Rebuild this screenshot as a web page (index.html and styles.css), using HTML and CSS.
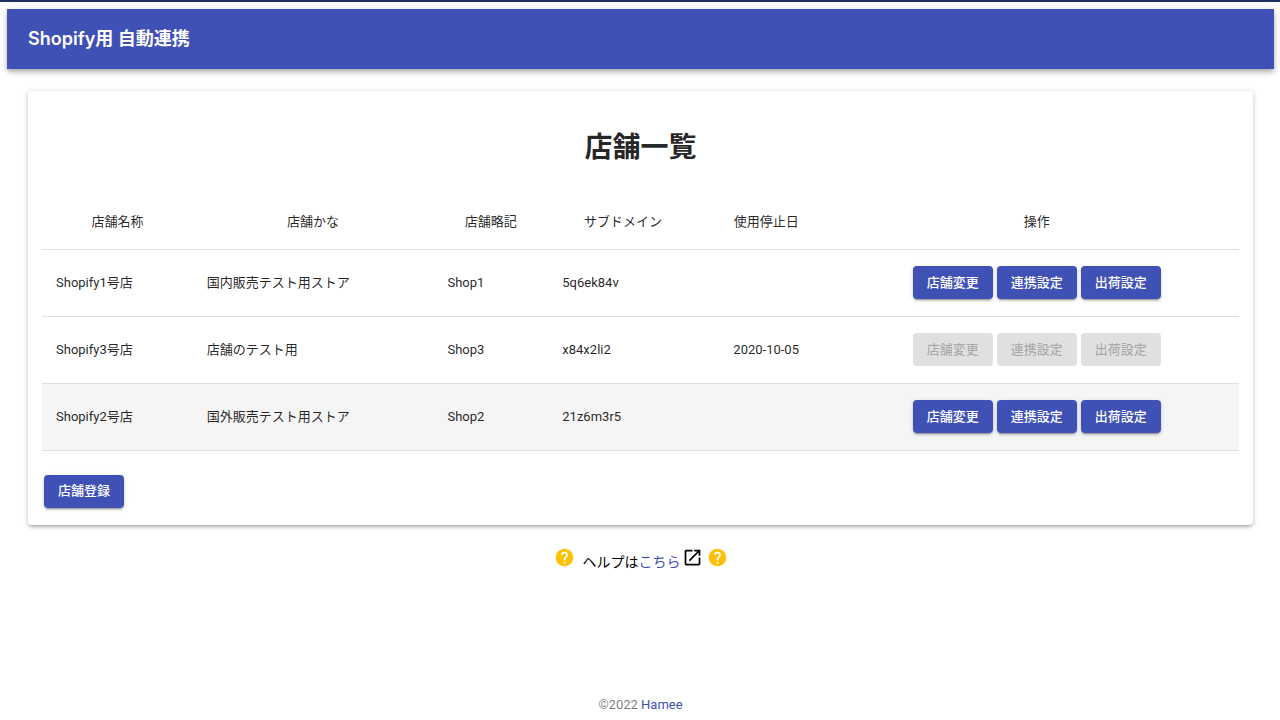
FILE: index.html
```html
<!DOCTYPE html>
<html lang="ja">
<head>
<meta charset="utf-8">
<meta name="viewport" content="width=device-width, initial-scale=1">
<title>Shopify用 自動連携</title>
<link rel="stylesheet" href="styles.css">
</head>
<body>
<header class="app-bar"><div class="app-title">Shopify用 自動連携</div></header>
<main class="content">
  <section class="card">
    <h1 class="card-title">店舗一覧</h1>
    <table class="shops">
      <colgroup><col class="c-name"><col class="c-kana"><col class="c-abbr"><col class="c-domain"><col class="c-date"><col class="c-actions"></colgroup>
      <thead>
        <tr><th scope="col">店舗名称</th><th scope="col">店舗かな</th><th scope="col">店舗略記</th><th scope="col">サブドメイン</th><th scope="col">使用停止日</th><th scope="col">操作</th></tr>
      </thead>
      <tbody>
        <tr><td>Shopify1号店</td><td>国内販売テスト用ストア</td><td>Shop1</td><td>5q6ek84v</td><td></td>
          <td><div class="actions"><button type="button" class="btn">店舗変更</button><button type="button" class="btn">連携設定</button><button type="button" class="btn">出荷設定</button></div></td></tr>
        <tr><td>Shopify3号店</td><td>店舗のテスト用</td><td>Shop3</td><td>x84x2li2</td><td class="date">2020-10-05</td>
          <td><div class="actions"><button type="button" class="btn" disabled>店舗変更</button><button type="button" class="btn" disabled>連携設定</button><button type="button" class="btn" disabled>出荷設定</button></div></td></tr>
        <tr class="highlight"><td>Shopify2号店</td><td>国外販売テスト用ストア</td><td>Shop2</td><td>21z6m3r5</td><td></td>
          <td><div class="actions"><button type="button" class="btn">店舗変更</button><button type="button" class="btn">連携設定</button><button type="button" class="btn">出荷設定</button></div></td></tr>
      </tbody>
    </table>
    <div class="card-footer"><button type="button" class="btn">店舗登録</button></div>
  </section>
  <div class="help">
    <svg class="icon help-icon" viewBox="0 0 24 24" aria-hidden="true"><path d="M12 2C6.48 2 2 6.48 2 12s4.48 10 10 10 10-4.48 10-10S17.52 2 12 2zm1 17h-2v-2h2v2zm2.07-7.75l-.9.92C13.45 12.9 13 13.5 13 15h-2v-.5c0-1.1.45-2.1 1.17-2.83l1.24-1.26c.37-.36.59-.86.59-1.41 0-1.1-.9-2-2-2s-2 .9-2 2H8c0-2.21 1.79-4 4-4s4 1.79 4 4c0 .88-.36 1.68-.93 2.25z"/></svg>
    <p class="help-text">ヘルプは<a href="#" class="link">こちら</a></p>
    <svg class="icon" viewBox="0 0 24 24" aria-hidden="true"><path d="M19 19H5V5h7V3H5c-1.11 0-2 .9-2 2v14c0 1.1.89 2 2 2h14c1.1 0 2-.9 2-2v-7h-2v7zM14 3v2h3.59l-9.83 9.83 1.41 1.41L19 6.41V10h2V3h-7z"/></svg>
    <svg class="icon help-icon trailing" viewBox="0 0 24 24" aria-hidden="true"><path d="M12 2C6.48 2 2 6.48 2 12s4.48 10 10 10 10-4.48 10-10S17.52 2 12 2zm1 17h-2v-2h2v2zm2.07-7.75l-.9.92C13.45 12.9 13 13.5 13 15h-2v-.5c0-1.1.45-2.1 1.17-2.83l1.24-1.26c.37-.36.59-.86.59-1.41 0-1.1-.9-2-2-2s-2 .9-2 2H8c0-2.21 1.79-4 4-4s4 1.79 4 4c0 .88-.36 1.68-.93 2.25z"/></svg>
  </div>
</main>
<footer class="footer">©2022 <a href="#" class="link">Hamee</a></footer>
</body>
</html>
```
FILE: styles.css
```css
* { box-sizing: border-box; }

body {
  margin: 0;
  min-height: 100vh;
  padding: 7px 6px 5px 7px;
  border-top: 2px solid #1d3160;
  display: flex;
  flex-direction: column;
  background: #fff;
  color: rgba(0, 0, 0, .87);
  font-family: Roboto, "Noto Sans CJK JP", sans-serif;
  font-size: 13px;
  line-height: 20px;
}

.app-bar {
  display: flex;
  align-items: center;
  min-height: 60px;
  padding: 0 21px;
  background: #3f51b5;
  color: #fff;
  box-shadow: 0 2px 4px -1px rgba(0, 0, 0, .2), 0 4px 5px rgba(0, 0, 0, .14), 0 1px 9px rgba(0, 0, 0, .12);
}

.app-title {
  font-family: Inter, "Noto Sans CJK JP", sans-serif;
  font-size: 18px;
  font-weight: 600;
  line-height: 28px;
}

.content { flex: 1; padding: 22px 21px 0; }

.card {
  padding: 33px 14px 17px;
  border-radius: 4px;
  background: #fff;
  box-shadow: 0 3px 3px -2px rgba(0, 0, 0, .2), 0 2px 4px rgba(0, 0, 0, .14), 0 1px 7px rgba(0, 0, 0, .12);
}

.card-title {
  margin: 0 0 24px;
  font-size: 28px;
  font-weight: 700;
  line-height: 48px;
  text-align: center;
}

.shops {
  width: 100%;
  table-layout: fixed;
  border-collapse: collapse;
}

.c-name { width: 12.6%; }
.c-kana { width: 20.1%; }
.c-abbr { width: 9.6%; }
.c-domain { width: 12.5%; }
.c-date { width: 11.4%; }
.c-actions { width: 33.8%; }

.shops th, .shops td {
  padding: 0 14px;
  border-bottom: 1px solid #e0e0e0;
  white-space: nowrap;
}

.shops th { height: 53px; font-weight: 400; text-align: center; }
.shops td { height: 67px; text-align: left; }
.shops .date { text-align: center; }
.highlight { background: #f5f5f5; }

.actions { display: flex; justify-content: center; gap: 4px; }

.btn {
  min-width: 80px;
  height: 33px;
  padding: 0 14px;
  border: 0;
  border-radius: 4px;
  background: #3f51b5;
  color: #fff;
  font-family: inherit;
  font-size: 13px;
  font-weight: 500;
  line-height: 20px;
  box-shadow: 0 3px 1px -2px rgba(0, 0, 0, .2), 0 2px 2px rgba(0, 0, 0, .14), 0 1px 5px rgba(0, 0, 0, .12);
}

.btn:disabled {
  background: #e0e0e0;
  color: rgba(0, 0, 0, .26);
  box-shadow: none;
}

.card-footer { padding: 24px 2px 0; }

.help {
  display: flex;
  justify-content: center;
  align-items: flex-start;
  margin-top: 22px;
  color: #000;
  font-size: 14px;
}

.help-text { margin: 0 1px 0 8px; padding-top: 5px; }
.icon { width: 21px; height: 21px; fill: currentColor; }
.help-icon { fill: #ffc107; }
.trailing { margin-left: 4px; }
.link { color: #3f51b5; text-decoration: none; }
.footer { text-align: center; color: rgba(0, 0, 0, .54); }
```
